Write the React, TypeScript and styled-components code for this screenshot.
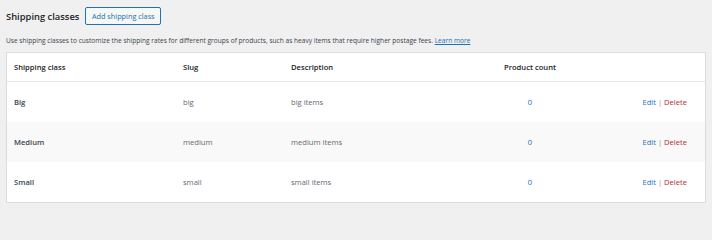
import React from "react";
import styled, { createGlobalStyle } from "styled-components";

const Global = createGlobalStyle`
  html, body { margin: 0; padding: 0; background: #f0f0f1; }
  body { font-family: "Open Sans", "Noto Sans", sans-serif; color: #3c434a; }
`;

const Page = styled.div`
  padding: 7px 6px 0 6px;
`;

const TitleRow = styled.div`
  display: flex;
  align-items: center;
  gap: 6px;
  height: 18px;
`;

const Title = styled.h2`
  margin: 0;
  font-size: 9.4px;
  font-weight: 600;
  color: #1d2327;
`;

const AddButton = styled.button`
  height: 18px;
  padding: 0 5.5px;
  border: 1px solid #2271b1;
  border-radius: 2px;
  background: #f6f7f7;
  color: #2271b1;
  font-family: inherit;
  font-size: 7.3px;
  line-height: 16px;
  cursor: pointer;
`;

const Intro = styled.p`
  margin: 0;
  padding-top: 11px;
  height: 16px;
  font-size: 6.6px;
  line-height: 10px;
  color: #3c434a;
`;

const Link = styled.a`
  color: #2271b1;
  text-decoration: underline;
`;

const Table = styled.div`
  background: #fff;
  border: 1px solid #dcdcde;
  box-shadow: 0 1px 1px rgba(0, 0, 0, 0.04);
`;

const Row = styled.div<{ $head?: boolean; $alt?: boolean }>`
  display: grid;
  grid-template-columns: 169px 108px 179px 120px 1fr;
  align-items: center;
  height: ${(p) => (p.$head ? "28px" : "40px")};
  padding: 0 18px 0 7px;
  background: ${(p) => (p.$alt ? "#f9f9f9" : "#fff")};
  border-bottom: ${(p) => (p.$head ? "1px solid #e6e6e6" : "none")};
  font-size: 7.6px;
  font-weight: ${(p) => (p.$head ? 600 : 400)};
  color: ${(p) => (p.$head ? "#1d2327" : "#646970")};
`;

const Name = styled.span`
  font-weight: 600;
  color: #3c434a;
`;

const Count = styled.span<{ $head?: boolean }>`
  text-align: center;
  color: ${(p) => (p.$head ? "#1d2327" : "#2271b1")};
`;

const Actions = styled.span`
  text-align: right;
  color: #8c8f94;
`;

const EditLink = styled.a`
  color: #2271b1;
  text-decoration: none;
`;

const DeleteLink = styled.a`
  color: #b32d2e;
  text-decoration: none;
`;

const classes = [
  { name: "Big", slug: "big", desc: "big items" },
  { name: "Medium", slug: "medium", desc: "medium items" },
  { name: "Small", slug: "small", desc: "small items" },
];

export default function App() {
  return (
    <>
      <Global />
      <Page>
        <TitleRow>
          <Title>Shipping classes</Title>
          <AddButton>Add shipping class</AddButton>
        </TitleRow>
        <Intro>
          Use shipping classes to customize the shipping rates for different groups of products, such as heavy items that
          require higher postage fees. <Link href="#">Learn more</Link>
        </Intro>
        <Table>
          <Row $head>
            <span>Shipping class</span>
            <span>Slug</span>
            <span>Description</span>
            <Count $head>Product count</Count>
            <span />
          </Row>
          {classes.map((c, i) => (
            <Row key={c.slug} $alt={i % 2 === 1}>
              <Name>{c.name}</Name>
              <span>{c.slug}</span>
              <span>{c.desc}</span>
              <Count>0</Count>
              <Actions>
                <EditLink href="#">Edit</EditLink> | <DeleteLink href="#">Delete</DeleteLink>
              </Actions>
            </Row>
          ))}
        </Table>
      </Page>
    </>
  );
}
